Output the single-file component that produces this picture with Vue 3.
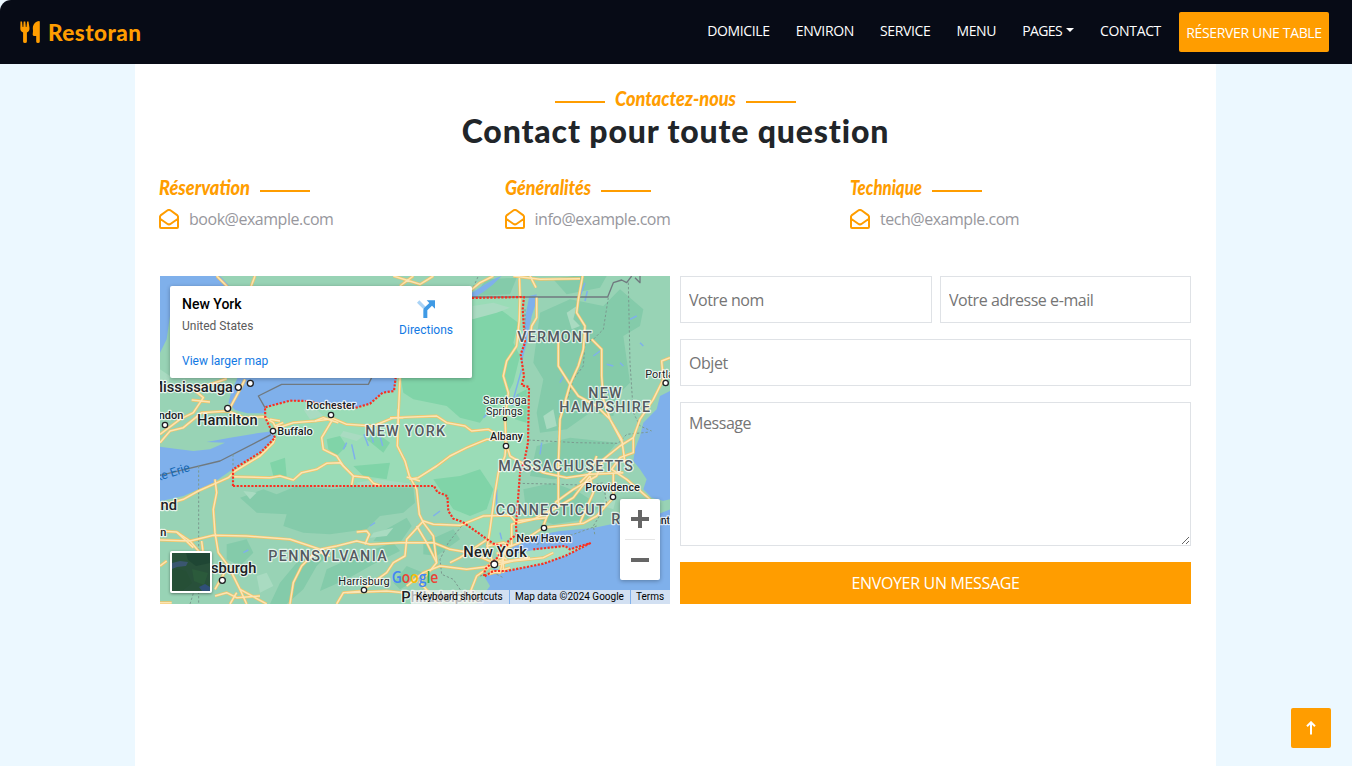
<script setup>
const navLinks = [
  { label: 'DOMICILE', key: 'home' },
  { label: 'ENVIRON', key: 'about' },
  { label: 'SERVICE', key: 'service' },
  { label: 'MENU', key: 'menu' },
  { label: 'PAGES', key: 'pages', caret: true },
  { label: 'CONTACT', key: 'contact' },
]

const contacts = [
  { title: 'Réservation', width: 91, mail: 'book@example.com' },
  { title: 'Généralités', width: 86, mail: 'info@example.com' },
  { title: 'Technique', width: 72, mail: 'tech@example.com' },
]

const water = [
  'M0 0H180L200 20L215 40L180 60L80 100L30 120L20 190L0 230Z',
  'M235 300H712L702 345L668 350L630 383L585 396L490 385L440 375L390 374L315 394L316 412L262 412L225 402L205 380L215 345Z',
  'M0 512L45 518L100 525L150 520L195 500L140 498L210 485L290 472L338 466L344 484L305 525L220 578L160 620L70 660L0 676Z',
  'M1530 345L1500 360L1490 400L1450 440L1440 480L1425 520L1420 555L1440 580L1460 610L1450 640L1475 665L1530 680Z',
  'M1530 700L1480 720L1400 735L1300 756L1200 765L1120 780L1060 810L1040 850L1000 880L975 905L990 930L950 984H1530Z',
  'M1108 60L1130 55L1125 90L1115 120L1105 170L1100 200L1090 240L1086 270L1082 235L1093 190L1096 120Z',
  'M936 50L975 25L1010 5L1025 0L1000 25L970 48L936 68Z',
]

const newYork = 'M219 630V580L303 528L345 485L330 455L316 425L315 394L390 374L440 375L490 385L585 396L630 383L668 350L702 345L707 300L800 160L936 66L1092 63L1085 130L1095 200L1082 235L1092 325L1107 333L1104 500L1080 580L1068 750L1070 775L1040 795L1010 850L1000 805L880 735L862 690L860 660L830 645L822 630Z'

const forestLight = [
  'M722 306H936V130L1020 100L1075 140L1060 200L1080 240L1060 320L1030 380L990 400L960 440L900 425L860 390L760 370L730 350Z',
  'M900 600L960 580L1000 640L980 700L930 720L880 700L820 610Z',
  'M500 490L540 480L560 510L530 540L505 520Z',
  'M620 490L650 470L690 500L670 530Z',
  'M1070 355L1100 340L1100 440L1065 430Z',
  'M330 560L375 545L380 600L340 600Z',
  'M580 570L690 560L680 610L610 600Z',
]

const forestDark = [
  'M240 665L310 640L350 655L410 630L520 640L570 632L760 635L765 680L730 710L660 720L620 760L510 775L430 770L370 750L380 715L290 710Z',
  'M1140 110L1230 70L1330 90L1380 40L1450 100L1440 150L1390 180L1410 320L1370 360L1360 420L1290 410L1220 460L1140 470L1130 410L1150 310L1120 260Z',
  'M1130 510L1230 485L1370 500L1330 550L1260 600L1180 610L1110 600Z',
  'M1090 640L1180 620L1260 650L1320 690L1280 730L1180 745L1100 720Z',
  'M360 920L410 860L470 820L510 830L470 870L430 940L380 984H330Z',
  'M500 880L600 835L700 800L720 825L640 865L560 910L480 945Z',
  'M200 805L260 790L280 830L240 870L200 850Z',
  'M660 770L740 725L755 750L720 800L640 795Z',
  'M790 800L880 760L900 790L830 840L790 835Z',
  'M1180 10L1240 0H1340L1320 35L1220 55Z',
  'M980 10L1070 5L1050 55L940 60Z',
  'M700 920L740 870L800 895L720 940Z',
  'M30 850H60L50 900H30Z',
]

const pale = [
  'M938 90L1000 80L1050 95L1010 110L938 130Z',
  'M590 620L650 610L770 625L720 632H600Z',
  'M1150 420L1180 400L1190 450L1160 460Z',
  'M1220 110L1250 90L1240 130L1260 150L1235 160Z',
  'M250 645L290 650L270 670Z',
  'M550 465L610 480L590 495L540 480Z',
  'M0 280L30 300L20 340L0 330Z',
  'M640 770L700 755L680 780L630 785Z',
  'M1340 640L1370 660L1360 700L1330 690Z',
  'M1180 820L1230 815L1205 845L1100 862L1080 845Z',
  'M430 400L460 390L490 420L450 430Z',
  'M290 900L320 890L340 930L300 950Z',
]

const roads = [
  'M0 475L60 430L100 410L130 365L100 340L150 325L200 308M95 372L150 378M0 500L30 465L70 455L125 410L205 405L240 340L255 310M205 405L250 425L310 422L340 440L350 460',
  'M340 460L400 440L465 435L520 428L560 445L640 450L700 425L830 420L860 440L915 450L935 465L985 460L1035 490L1050 540L1075 555L1150 590L1220 605L1290 595L1390 590',
  'M720 305L715 420L712 510L735 555L748 600L770 640L778 715L790 740L820 780L830 860L780 920L840 984',
  'M345 485L340 500L300 540L225 585L205 605L160 625L115 645L70 670L0 690',
  'M218 602L330 605L360 600L400 612L425 590L470 580L500 562L540 560L580 600L575 628M580 600L625 605L640 622L665 630',
  'M515 435L500 460L485 485L490 520L530 540L550 570L580 600',
  'M748 610L775 605L830 570L870 540L920 515L980 490L1035 490',
  'M1080 65L1078 130L1070 210L1040 255L1030 300L1045 350L1035 430L1038 500L1035 540L1015 590L1005 650L990 760L982 810L1000 865',
  'M1130 65L1130 125L1115 150L1110 190M1268 0L1255 70L1250 110L1275 150L1270 220L1255 270L1230 325L1220 360L1200 430L1195 570L1195 690L1165 710L1150 750',
  'M1195 180L1195 270L1230 325L1255 360L1310 390L1350 430L1390 505M1295 190L1325 220L1325 300L1330 370L1350 430L1385 490L1395 560',
  'M1530 245L1505 255L1510 310L1480 370L1440 430L1420 485L1380 510L1330 550L1310 600L1240 640L1185 680M1420 485L1420 530L1380 545L1355 580L1400 610L1470 670',
  'M1290 600L1300 650L1260 740M1310 540L1290 590L1260 620M1360 590L1360 665L1310 720L1270 742L1150 755L1080 800L1040 815L1000 865',
  'M1055 810L1055 745L1120 730L1180 700L1240 665L1290 600',
  'M0 765L50 768L90 795L160 778L260 780L390 790L480 820L530 810L590 795L630 805L720 800L820 800L870 820L930 830L1000 860',
  'M165 610L170 650L160 700L165 770L175 830L205 870L240 940L260 984M0 792L90 795L120 830M50 768L100 815M125 795L130 835',
  'M590 768L620 765L628 775L615 805M390 984L400 920L425 870L470 825L510 840',
  'M610 945L550 950L530 984M560 950L680 945L730 950M610 940L680 890L700 860L735 840L740 790L790 735L820 745L900 748L970 720L1050 718L1065 735L1160 725',
  'M770 750L800 800L830 860M1000 870L920 880L840 870L790 890L740 930M1000 865L950 900L930 950',
  'M982 790L900 845L870 860M980 810L1030 800L1055 810M1040 800L1020 890L990 885',
  'M1000 870L1060 855L1150 845L1180 830M1010 860L1110 845',
  'M170 0L210 40M285 0L270 40M700 0L780 25L820 0M720 30L760 0M930 45L960 20L1000 0M1078 0L1080 60M1110 0L1128 35M1060 0L1140 10L1260 8',
  'M0 870L20 855M0 980H35M165 960L200 950L230 965L300 960M205 870L165 940M230 950L210 984M240 940L320 984',
  'M330 430L360 435M345 450L370 440M465 435L490 425L535 440M740 603L780 615M690 425H730M715 400V440',
  'M985 895L1050 875M1010 830L1040 850M1030 820L1030 890M980 870L1030 850',
]

const dashed = [
  'M116 570V984M219 535V575M90 984L110 920',
  'M1345 65L1330 160L1300 190L1275 200L1270 270L1240 310L1222 370L1200 420L1195 490',
  'M1405 20L1410 260L1420 410L1440 450L1475 465',
  'M1105 492L1250 500L1375 502L1400 475L1470 468',
  'M1075 622L1170 624L1290 628L1330 620L1340 685L1300 750L1305 780',
  'M905 750L865 800L840 850L845 895L880 910L910 955M960 900L1000 890L1030 905M1130 805L1240 775L1310 750',
  'M935 45L955 0M1095 100L1095 180',
]

const borders = [
  'M635 305L625 325H365L295 360L315 395',
  'M333 476L180 555L0 598',
  'M936 63H1343L1360 20L1385 12L1400 20L1415 0M1425 5L1440 20V0',
]

const redBorder = [
  'M219 630V580L303 528L345 485L330 455L316 425L315 394L390 374L440 375L490 385L585 396L630 383L668 350L702 345L707 305M936 66L1092 63L1088 100L1095 200L1082 235L1092 300L1085 328L1107 333L1104 500L1092 560L1080 590L1068 750L1070 775L1045 795L1040 812',
  'M219 630H822L832 648L862 660L865 705L880 728L908 738L1000 803L1035 812L1012 845L975 880L972 902L1000 885L1040 885L1150 863L1215 840L1290 802L1255 812L1230 820L1215 810L1120 820',
]

const lakes = [
  'M575 505L585 550M612 475L625 510M630 460L640 500M655 462L668 510M560 500L550 520',
  'M1275 20L1260 60M1282 45L1275 75M1140 160L1130 170M1085 280L1060 370M970 425L985 410M1020 770L1025 790M1075 355L1055 390',
  'M1410 130L1430 120M1440 200L1450 210M1300 240L1320 225M1345 350L1350 335M1010 640V720M120 640L115 650M820 720L840 705',
  'M1380 260L1390 270M1140 535L1145 500M1360 270L1340 265M630 750L645 740M250 830L265 822M1200 320L1210 300',
]

const labels = [
  { t: 'Hamilton', x: 111, y: 446, w: 182, c: 'city' },
  { t: 'Buffalo', x: 352, y: 476, w: 106, c: 'town' },
  { t: 'Rochester', x: 439, y: 398, w: 148, c: 'town' },
  { t: 'Saratoga', x: 969, y: 384, w: 131, c: 'town light' },
  { t: 'Springs', x: 978, y: 417, w: 110, c: 'town light' },
  { t: 'Albany', x: 990, y: 491, w: 99, c: 'town' },
  { t: 'Providence', x: 1276, y: 644, w: 164, c: 'town' },
  { t: 'New Haven', x: 1069, y: 797, w: 166, c: 'town' },
  { t: 'New York', x: 910, y: 843, w: 191, c: 'city' },
  { t: 'Harrisburg', x: 535, y: 926, w: 154, c: 'town light' },
  { t: 'Philadelphia', x: 724, y: 977, w: 245, c: 'city' },
  { t: 'Portland', x: 1456, y: 305, w: 122, c: 'town light' },
  { t: 'Nantucket', x: 1464, y: 745, w: 140, c: 'town' },
  { t: 'NEW YORK', x: 616, y: 480, w: 239, c: 'state' },
  { t: 'VERMONT', x: 1072, y: 198, w: 223, c: 'state' },
  { t: 'NEW', x: 1285, y: 366, w: 100, c: 'state' },
  { t: 'HAMPSHIRE', x: 1198, y: 408, w: 272, c: 'state' },
  { t: 'MASSACHUSETTS', x: 1015, y: 585, w: 404, c: 'state' },
  { t: 'CONNECTICUT', x: 1007, y: 717, w: 327, c: 'state' },
  { t: 'PENNSYLVANIA', x: 325, y: 855, w: 355, c: 'state' },
  { t: 'R.I.', x: 1354, y: 744, w: 60, c: 'state' },
]

const clippedLabels = [
  { t: 'Mississauga', x: 219, y: 348, c: 'city' },
  { t: 'London', x: 70, y: 430, c: 'town' },
  { t: 'Cleveland', x: 51, y: 703, c: 'city' },
  { t: 'Akron', x: 19, y: 780, c: 'town' },
  { t: 'Pittsburgh', x: 289, y: 892, c: 'city' },
]

const pins = [
  [235, 334, 9], [271, 322, 9], [203, 397, 9], [15, 447, 8], [339, 465, 8], [513, 417, 8],
  [1035, 429, 5], [1038, 510, 8], [1359, 663, 8], [1152, 756, 8], [1003, 865, 10],
  [612, 942, 8], [187, 913, 9], [1517, 321, 8],
]
</script>

<template>
  <div class="page">
    <header class="navbar">
      <a class="brand">
        <svg class="brand-icon" viewBox="0 0 20 22" width="20" height="22">
          <path d="M0.5 0.5H2L2.6 6H3.3L3.7 0.5H5.3L5.8 6H6.5L7.1 0.5H8.5L9.5 7Q9.8 10.2 6.9 11.4V20.5Q6.9 22 5 22Q3.1 22 3.1 20.5V11.4Q0 10.2 0.3 7Z" />
          <path d="M19.8 1V20.5Q19.8 22 18 22Q16.2 22 16.2 20.5V15H14Q12.6 15 12.7 13.6L13 10Q12 4.8 15 1.8Q17 0 19 0Q19.8 0 19.8 1Z" />
        </svg>
        <span>Restoran</span>
      </a>
      <nav class="links">
        <a v-for="l in navLinks" :key="l.key" :class="['link', l.key]">
          <span>{{ l.label }}</span><i v-if="l.caret" class="caret"></i>
        </a>
        <a class="reserve">RÉSERVER UNE TABLE</a>
      </nav>
    </header>

    <main class="content">
      <div class="heading">
        <div class="eyebrow">
          <i class="rule"></i>
          <svg class="script" width="121" height="28"><text x="0" y="19" textLength="121" lengthAdjust="spacingAndGlyphs">Contactez-nous</text></svg>
          <i class="rule"></i>
        </div>
        <h1>Contact pour toute question</h1>
      </div>

      <div class="contacts">
        <div v-for="c in contacts" :key="c.mail" class="contact">
          <div class="contact-title">
            <svg class="script" :width="c.width" height="28"><text x="0" y="19" :textLength="c.width" lengthAdjust="spacingAndGlyphs">{{ c.title }}</text></svg>
            <i class="rule"></i>
          </div>
          <div class="mail">
            <svg viewBox="0 0 20 20" width="20" height="20">
              <path d="M1 18V7.6Q1 6.9 1.6 6.4L8.6 1.3Q10 0.4 11.4 1.3L18.4 6.4Q19 6.9 19 7.6V18Q19 19 18 19H2Q1 19 1 18ZM1.4 10L8.2 14.7Q10 16 11.8 14.7L18.6 10" />
            </svg>
            <span>{{ c.mail }}</span>
          </div>
        </div>
      </div>

      <div class="columns">
        <div class="map">
          <svg class="map-art" viewBox="0 0 1530 984" width="510" height="328">
            <rect width="1530" height="984" fill="#98d3b5" />
            <path v-for="d in forestDark" :key="d" :d="d" fill="#84cbaa" />
            <path :d="newYork" fill="#9adcb7" />
            <path v-for="d in forestLight" :key="d" :d="d" fill="#80d4a8" />
            <path v-for="d in pale" :key="d" :d="d" fill="#a9dbc1" />
            <path v-for="d in water" :key="d" :d="d" fill="#7fb0eb" />
            <path d="M1005 878L1020 850L1060 835L1120 822L1215 810L1235 820L1290 803L1215 840L1150 863L1040 885Z" fill="#a5dfc2" />
            <path d="M1380 735L1400 690L1480 682L1530 670V700L1500 712L1450 740Z" fill="#98d3b5" />
            <path v-for="d in lakes" :key="d" :d="d" class="lake" />
            <path v-for="d in borders" :key="d" :d="d" class="border" />
            <path v-for="d in dashed" :key="d" :d="d" class="dashed" />
            <path v-for="d in roads" :key="'c' + d" :d="d" class="road-case" />
            <path v-for="d in roads" :key="'r' + d" :d="d" class="road" />
            <path v-for="d in redBorder" :key="d" :d="d" class="red" />
            <circle v-for="p in pins" :key="p.join()" :cx="p[0]" :cy="p[1]" :r="p[2]" class="pin" />
            <text v-for="l in labels" :key="l.t + l.y" :x="l.x" :y="l.y" :textLength="l.w" :class="l.c">{{ l.t }}</text>
            <text v-for="l in clippedLabels" :key="l.t" :x="l.x" :y="l.y" text-anchor="end" :class="l.c">{{ l.t }}</text>
            <text x="0" y="0" text-anchor="end" class="lake-name" transform="translate(92 584) rotate(-18)">Lake Erie</text>
            <text x="695" y="920" textLength="140" lengthAdjust="spacingAndGlyphs" class="google"><tspan fill="#4285f4">G</tspan><tspan fill="#ea4335">o</tspan><tspan fill="#fbbc04">o</tspan><tspan fill="#4285f4">g</tspan><tspan fill="#34a853">l</tspan><tspan fill="#ea4335">e</tspan></text>
          </svg>

          <div class="place">
            <div class="place-text">
              <strong>New York</strong>
              <span>United States</span>
              <a>View larger map</a>
            </div>
            <div class="directions">
              <svg viewBox="0 0 54 54" width="18" height="18">
                <path d="M0 8L7 1L26 20L19 27Z" fill="#a9d3f6" />
                <path d="M19 54V30Q19 26 22 23L37 9L29 1H54V26L45 17L31 31V54Z" fill="#3f9ae5" />
              </svg>
              <span>Directions</span>
            </div>
          </div>

          <div class="satellite">
            <svg viewBox="0 0 38 38" width="38" height="38">
              <rect width="38" height="38" fill="#28503a" />
              <path d="M14 0H38V10L24 13L16 7Z" fill="#1f4634" />
              <path d="M0 15L14 18L20 30L10 38H0Z" fill="#264f36" />
              <path d="M20 16L36 20L32 32L22 28Z" fill="#2b5a3b" />
              <path d="M0 10L8 8L16 9L14 13L5 14L0 16Z" fill="#3a5670" />
              <path d="M27 34L33 31L38 34V38H30Z" fill="#304f78" />
            </svg>
          </div>

          <div class="zoom">
            <svg viewBox="0 0 18 18" width="18" height="18"><path d="M7 0H11V7H18V11H11V18H7V11H0V7H7Z" /></svg>
            <i></i>
            <svg viewBox="0 0 18 18" width="18" height="18"><path d="M0 7H18V11H0Z" /></svg>
          </div>

          <div class="credits">
            <span class="keys">Keyboard shortcuts</span>
            <span class="data">Map data ©2024 Google</span>
            <span class="terms">Terms</span>
          </div>
        </div>

        <form class="form" @submit.prevent>
          <div class="row">
            <input type="text" placeholder="Votre nom" />
            <input type="email" placeholder="Votre adresse e-mail" />
          </div>
          <input type="text" placeholder="Objet" />
          <textarea placeholder="Message"></textarea>
          <button type="submit">ENVOYER UN MESSAGE</button>
        </form>
      </div>
    </main>

    <a class="to-top">
      <svg viewBox="0 0 10 14" width="10" height="14"><path d="M5 13.5V1.6M1 5.2L5 1.3L9 5.2" /></svg>
    </a>
  </div>
</template>

<style>
body {
  overflow: hidden;
}
</style>

<style scoped>
.page {
  height: 766px;
  display: flex;
  flex-direction: column;
  background: #ecf8ff;
  font-family: "Open Sans", "Noto Sans", sans-serif;
}
.navbar {
  box-sizing: border-box;
  flex: none;
  height: 64px;
  padding: 0 23px 0 20px;
  display: flex;
  justify-content: space-between;
  align-items: center;
  background: #070b16;
  border-top-left-radius: 11px;
}
.brand {
  display: flex;
  align-items: center;
  gap: 8px;
  color: #ff9d00;
  font: 900 22.5px/30px Lato, sans-serif;
  letter-spacing: 0.45px;
}
.brand span {
  padding-top: 2px;
}
.brand-icon {
  fill: #ff9d00;
}
.links {
  display: flex;
  align-items: center;
  color: #fff;
  font-size: 14px;
  line-height: 20px;
  letter-spacing: -0.35px;
}
.link {
  display: flex;
  align-items: center;
  margin-right: 26px;
  padding-bottom: 2px;
}
.link.pages {
  letter-spacing: -0.6px;
}
.link.contact {
  margin-right: 18px;
}
.caret {
  margin-left: 4px;
  margin-bottom: 2px;
  border: 4px solid transparent;
  border-top-color: #fff;
  border-bottom: 0;
}
.reserve {
  box-sizing: border-box;
  width: 150px;
  height: 40px;
  padding-top: 11px;
  text-align: center;
  border-radius: 2px;
  background: #ff9d00;
  white-space: nowrap;
}
.content {
  box-sizing: border-box;
  flex: 1;
  width: 1081px;
  margin-left: 135px;
  padding: 23px 25px 0;
  background: #fff;
}
.eyebrow {
  display: flex;
  justify-content: center;
  height: 28px;
}
.eyebrow .rule {
  margin-top: 14px;
}
.eyebrow .script {
  margin: 0 10px;
}
.script {
  display: block;
  overflow: visible;
  fill: #ff9d00;
  font: italic 900 20px Lato, sans-serif;
}
.rule {
  width: 50px;
  height: 2px;
  background: #ff9d00;
}
h1 {
  margin: -3px 0 0;
  text-align: center;
  color: #212529;
  font: 900 32px/38px Lato, sans-serif;
  letter-spacing: 0.85px;
  white-space: nowrap;
}
.contacts {
  display: grid;
  grid-template-columns: repeat(3, 345.5px);
  margin-top: 26px;
  height: 100px;
}
.contact-title {
  display: flex;
  height: 32px;
  margin-left: -1px;
}
.contact-title .rule {
  margin: 14px 0 0 10px;
}
.mail {
  display: flex;
  align-items: center;
  gap: 10px;
  margin-left: -1px;
  height: 22px;
  color: #97979d;
  font-size: 16px;
  letter-spacing: -0.47px;
}
.mail svg {
  fill: none;
  stroke: #ff9d00;
  stroke-width: 2;
}
.columns {
  display: flex;
  gap: 10px;
}
.map {
  position: relative;
  width: 510px;
  height: 328px;
  overflow: hidden;
  font-family: Roboto, sans-serif;
}
.map-art {
  display: block;
}
.road-case,
.road,
.lake,
.border,
.dashed,
.red {
  fill: none;
  stroke-linejoin: round;
}
.road-case {
  stroke: #f4c365;
  stroke-width: 8.5;
}
.road {
  stroke: #fbe5b4;
  stroke-width: 4.5;
}
.lake {
  stroke: #7fb0eb;
  stroke-width: 4.5;
}
.border {
  stroke: #70797f;
  stroke-width: 4;
}
.dashed {
  stroke: #7b9a8f;
  stroke-width: 3;
  stroke-dasharray: 7 6;
}
.red {
  stroke: #fa2f20;
  stroke-width: 6.5;
  stroke-dasharray: 6.5 4.5;
}
.pin {
  fill: #fff;
  stroke: #202124;
  stroke-width: 4;
}
text.city,
text.town,
text.state {
  paint-order: stroke;
  stroke: rgba(255, 255, 255, 0.75);
  stroke-width: 7;
  stroke-linejoin: round;
  fill: #202124;
}
text.city {
  font-size: 44px;
  font-weight: 500;
}
text.town {
  font-size: 33px;
  font-weight: 500;
}
text.light {
  font-weight: 400;
}
text.state {
  font-size: 43px;
  font-weight: 500;
  fill: #545a60;
}
.lake-name {
  font-size: 36px;
  fill: #1769b5;
}
.google {
  font: 600 50px "Open Sans", sans-serif;
}
.place {
  position: absolute;
  left: 10px;
  top: 10px;
  box-sizing: border-box;
  width: 302px;
  height: 92px;
  padding: 9px 19px 0 12px;
  display: flex;
  justify-content: space-between;
  background: #fff;
  border-radius: 2px;
  box-shadow: 0 1px 4px rgba(0, 0, 0, 0.3);
  font-size: 12px;
}
.place-text {
  display: flex;
  flex-direction: column;
}
.place-text strong {
  font-size: 14px;
  font-weight: 500;
  line-height: 18px;
  color: #000;
}
.place-text span {
  margin-top: 5px;
  line-height: 16px;
  color: #5b5b5b;
}
.place-text a {
  margin-top: 19px;
  line-height: 16px;
  color: #1279e4;
}
.directions {
  display: flex;
  flex-direction: column;
  align-items: center;
  padding-top: 5px;
  line-height: 16px;
  color: #1279e4;
}
.directions span {
  margin-top: 4px;
}
.satellite {
  position: absolute;
  left: 10px;
  top: 275px;
  width: 38px;
  height: 38px;
  border: 2px solid #fff;
  border-radius: 2px;
  box-shadow: 0 1px 3px rgba(0, 0, 0, 0.4);
}
.satellite svg {
  display: block;
}
.zoom {
  position: absolute;
  left: 460px;
  top: 223px;
  width: 40px;
  height: 81px;
  display: flex;
  flex-direction: column;
  align-items: center;
  justify-content: space-evenly;
  background: #fff;
  border-radius: 2px;
  box-shadow: 0 1px 4px rgba(0, 0, 0, 0.3);
}
.zoom svg {
  fill: #666;
}
.zoom i {
  width: 30px;
  height: 1px;
  background: #e6e6e6;
}
.credits {
  position: absolute;
  left: 251px;
  right: 0;
  bottom: 0;
  height: 14px;
  display: flex;
  gap: 1px;
  font-size: 10px;
  line-height: 14px;
  color: #000;
}
.credits span {
  background: rgba(245, 245, 245, 0.7);
  box-sizing: border-box;
  padding-left: 5px;
  white-space: nowrap;
}
.credits .keys {
  width: 98px;
}
.credits .data {
  width: 120px;
}
.credits .terms {
  flex: 1;
}
.form {
  width: 511px;
  display: flex;
  flex-direction: column;
}
.row {
  display: grid;
  grid-template-columns: 252px 251px;
  gap: 8px;
}
input,
textarea {
  box-sizing: border-box;
  width: 100%;
  height: 47px;
  margin: 0 0 16px;
  padding: 1px 8px 0 8px;
  border: 1px solid #dfe2e6;
  border-radius: 0;
  background: #fff;
  font: 16px/24px "Open Sans", "Noto Sans", sans-serif;
  letter-spacing: -0.43px;
}
textarea {
  height: 144px;
  padding-top: 8px;
  resize: vertical;
}
input::placeholder,
textarea::placeholder {
  color: #757575;
  opacity: 1;
}
button {
  height: 42px;
  padding: 0;
  border: 0;
  background: #ff9d00;
  color: #fff;
  font: 16px/24px "Open Sans", "Noto Sans", sans-serif;
  letter-spacing: -0.33px;
}
.to-top {
  position: absolute;
  left: 1291px;
  top: 708px;
  width: 40px;
  height: 40px;
  display: flex;
  align-items: center;
  justify-content: center;
  border-radius: 2px;
  background: #ff9d00;
}
.to-top svg {
  fill: none;
  stroke: #fff;
  stroke-width: 2;
}
</style>
